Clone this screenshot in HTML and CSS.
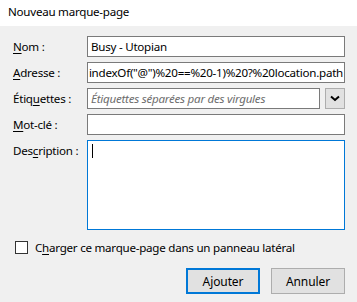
FILE: index.html
```html
<!DOCTYPE html>
<html lang="fr">
<head>
  <meta charset="UTF-8">
  <title>Nouveau marque-page</title>
  <link rel="stylesheet" href="styles.css">
</head>
<body>
  <div class="titlebar">Nouveau marque-page</div>
  <div class="dialog">
    <div class="fields">
      <label class="lbl"><u>N</u>om :</label>
      <div class="field">Busy - Utopian</div>

      <label class="lbl"><u>A</u>dresse :</label>
      <div class="field field-url"><span>indexOf("@")%20==%20-1)%20?%20location.path</span></div>

      <label class="lbl">Étiq<u>u</u>ettes :</label>
      <div class="tags-row">
        <div class="field placeholder">Étiquettes séparées par des virgules</div>
        <div class="drop-btn">
          <svg width="10" height="7" viewBox="0 0 10 7"><path d="M1 1.5 L5 5 L9 1.5" fill="none" stroke="#000" stroke-width="2"/></svg>
        </div>
      </div>

      <label class="lbl"><u>M</u>ot-clé :</label>
      <div class="field"></div>

      <label class="lbl lbl-top">Des<u>c</u>ription :</label>
      <div class="field textarea"><span class="caret"></span></div>
    </div>

    <div class="check-row">
      <span class="checkbox"></span>
      <span>C<u>h</u>arger ce marque-page dans un panneau latéral</span>
    </div>

    <div class="buttons">
      <button class="btn btn-default">Ajouter</button>
      <button class="btn">Annuler</button>
    </div>
  </div>
</body>
</html>
```

FILE: styles.css
```css
body {
  margin: 0;
  width: 357px;
  height: 302px;
  background-color: #f0f0f0;
  font-family: "Noto Sans", "Open Sans", sans-serif;
  font-size: 11.6px;
  letter-spacing: -0.25px;
  color: #000;
  overflow: hidden;
}
u {
  text-decoration-thickness: 1px;
  text-underline-offset: 2px;
}
.titlebar {
  height: 26px;
  line-height: 24px;
  padding-left: 8px;
  background-color: #fff;
}
.dialog {
  padding: 10px 12px 0 13px;
}
.fields {
  display: grid;
  grid-template-columns: 74px 258px;
  grid-template-rows: 21px 21px 21px 21px 90px;
  row-gap: 5px;
}
.lbl {
  display: flex;
  align-items: center;
  white-space: nowrap;
}
.lbl-top {
  align-items: flex-start;
  padding-top: 3px;
}
.field {
  box-sizing: border-box;
  height: 21px;
  border: 1px solid #7a7a7a;
  background-color: #fff;
  padding: 0 3px;
  line-height: 19px;
  white-space: nowrap;
  overflow: hidden;
}
.field-url {
  display: flex;
  justify-content: flex-end;
  padding-right: 1px;
}
.tags-row {
  display: flex;
  gap: 5px;
}
.tags-row .field {
  flex: 1;
}
.placeholder {
  color: #6d6d6d;
  font-style: italic;
}
.drop-btn {
  box-sizing: border-box;
  width: 20px;
  height: 21px;
  border: 1px solid #adadad;
  background-color: #e1e1e1;
  display: flex;
  align-items: center;
  justify-content: center;
}
.textarea {
  height: 90px;
  border-color: #0078d7;
  padding: 3px 0 0 4px;
}
.caret {
  display: block;
  width: 1px;
  height: 14px;
  background-color: #000;
}
.check-row {
  display: flex;
  align-items: center;
  gap: 7px;
  margin-top: 10px;
  padding-left: 2px;
}
.checkbox {
  box-sizing: border-box;
  width: 13px;
  height: 13px;
  border: 1px solid #333;
  background-color: #fff;
}
.buttons {
  display: flex;
  justify-content: flex-end;
  gap: 11px;
  margin-top: 13px;
}
.btn {
  box-sizing: border-box;
  width: 74px;
  height: 26px;
  font-family: inherit;
  font-size: 12px;
  letter-spacing: -0.1px;
  background-color: #e1e1e1;
  border: 1px solid #adadad;
  padding: 0;
  color: #000;
}
.btn-default {
  border: 2px solid #0078d7;
}
```
